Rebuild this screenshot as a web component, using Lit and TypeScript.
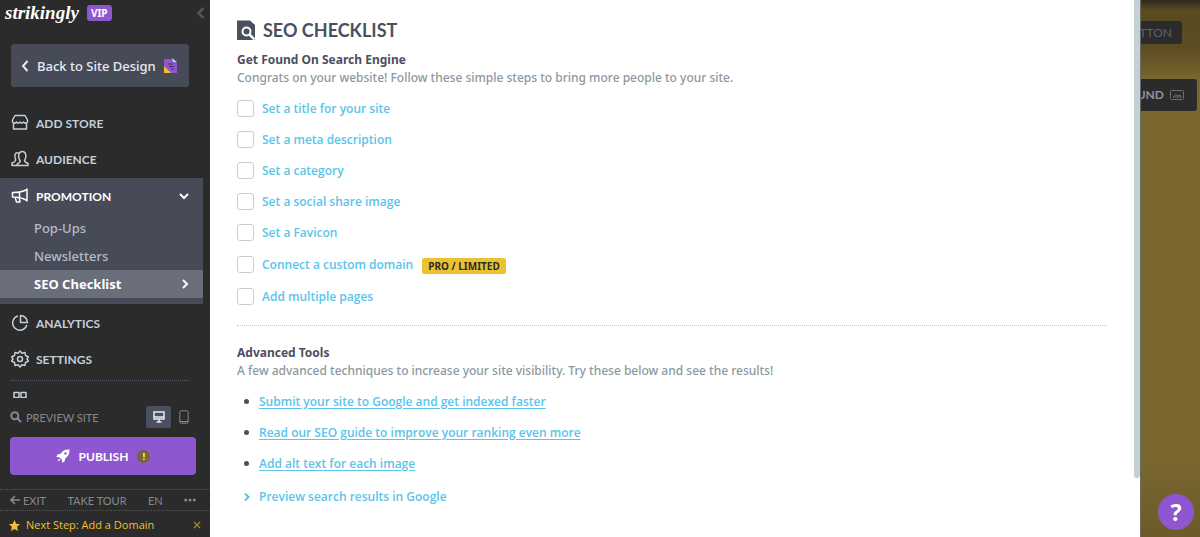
import { LitElement, html, css, svg, nothing } from "lit";
import { customElement, property } from "lit/decorators.js";
import { classMap } from "lit/directives/class-map.js";

const icons = {
  store: svg`<path d="M4 1.500h10l2.500 4.500v2c-1.500 1.500-3 1.500-4 0-1.500 1.500-2.500 1.500-3.500 0-1.500 1.500-2.500 1.500-3.500 0-1 1.500-2.500 1.500-4 0V6z M2.500 9v6h13V9"/>`,
  audience: svg`<path d="M8 13c1.500-1 1.500-2 .5-3.500C6.500 5.500 8 1.500 11.300 1.500s4.700 4 2.700 8c-1 1.500-.5 2.500 3 4V15.500H5.500c.3-1.500 1-2 2.500-2.500z M7.500 3C4 2 3 5.500 4.500 9c.5 2-.5 3-3.500 4v2.500h5"/>`,
  promo: svg`<path d="M16 1.500v13 M16 2.500C12 5 8 5.500 1.500 5.500v4.500C8 10 12 11 16 13.500 M8.500 5.500V10 M4 10l1.500 5H9l-1-5"/>`,
  analytics: svg`<path d="M7 2a7.200 7.200 0 1 0 8.800 9 M9.500 1.500V8.500h7A7.200 7.200 0 0 0 9.500 1.500z"/>`,
  settings: svg`<path d="M9 1l2 2.200 3-.7.500 3L17.500 7 16 9l1.500 2-3 1.500-.5 3-3-.7L9 17l-2-2.200-3 .7-.5-3L.5 11 2 9 .5 7l3-1.500.5-3 3 .7z"/><circle cx="9" cy="9" r="2.500"/>`,
  grid: svg`<path d="M3 2.500h5v5H3z M10 2.500h5v5h-5z"/>`,
};

interface NavItem {
  label: string;
  icon: keyof typeof icons;
  children?: string[];
}

const NAV: NavItem[] = [
  { label: "ADD STORE", icon: "store" },
  { label: "AUDIENCE", icon: "audience" },
  { label: "PROMOTION", icon: "promo", children: ["Pop-Ups", "Newsletters", "SEO Checklist"] },
  { label: "ANALYTICS", icon: "analytics" },
  { label: "SETTINGS", icon: "settings" },
];

@customElement("editor-sidebar")
class EditorSidebar extends LitElement {
  @property() current = "SEO Checklist";

  static styles = css`
    :host {
      display: flex;
      flex-direction: column;
      box-sizing: border-box;
      background: #2b2b2b;
      color: #c3cfd9;
      font-family: Lato, "Open Sans", sans-serif;
      overflow: hidden;
    }
    * { box-sizing: border-box; }
    svg { display: block; flex: none; fill: none; }
    a { color: inherit; text-decoration: none; }
    button { font: inherit; color: inherit; border: 0; background: none; padding: 0; cursor: pointer; }
    .brand { display: flex; align-items: center; height: 26px; padding: 0 5px; flex: none; }
    .wordmark { font: italic bold 19px/24px "Liberation Serif", serif; color: #fff; }
    .vip { margin-left: 8px; padding: 0 4px; border-radius: 3px; background: #8e56cf; color: #fff; font: bold 10px/16px "Noto Sans", sans-serif; }
    .collapse { margin-left: auto; color: #4e5464; }
    .back {
      display: flex; align-items: center; gap: 8px; flex: none;
      height: 43px; margin: 18px 21px 18px 11px; padding: 0 10px;
      border-radius: 3px; background: #474b58; color: #e6ecf1;
      font: 500 13px/18px "Noto Sans", sans-serif; white-space: nowrap;
    }
    nav { flex: 1; min-height: 0; overflow: hidden; }
    ul { list-style: none; margin: 0; padding: 0; }
    .item { display: flex; align-items: center; gap: 7px; height: 36px; padding: 0 14px 0 11px; font-weight: 700; font-size: 12px; }
    .group { margin: 1px 7px 1px 0; padding-bottom: 6px; background: #474b58; }
    .group .item { color: #fff; }
    .grow { margin-left: auto; }
    .sub { display: flex; align-items: center; height: 28px; padding: 0 14px 0 34px; font: 500 13px/18px "Noto Sans", sans-serif; color: #b4bdc7; }
    .active { background: #6a6e7b; color: #fff; font-weight: 700; }
    .rule { margin: 3px 21px 0 11px; border-top: 1px dotted #565b69; }
    .preview { display: flex; align-items: center; height: 22px; margin-top: 8px; padding: 0 14px 0 10px; flex: none; font-size: 11px; color: #858993; }
    .search { display: flex; align-items: center; gap: 4px; margin-right: auto; }
    .device { display: grid; place-items: center; width: 25px; height: 22px; border-radius: 2px; }
    .on { background: #4b5060; color: #e6ecf1; }
    .publish {
      display: flex; align-items: center; justify-content: center; gap: 9px; flex: none;
      height: 38px; margin: 9px 14px 14px 10px; border-radius: 4px;
      background: #8e56cf; color: #fff; font-weight: 700; font-size: 12px;
    }
    .warn { display: grid; place-items: center; width: 13px; height: 13px; border-radius: 50%; background: #7a6730; font-size: 10px; line-height: 13px; }
    .links { display: flex; align-items: center; justify-content: space-between; flex: none; height: 22px; padding: 0 14px 0 10px; border: dotted #50545f; border-width: 1px 0; font-size: 11px; color: #858993; }
    .exit { display: flex; align-items: center; gap: 3px; }
    .next { display: flex; align-items: center; gap: 6px; flex: none; height: 26px; padding: 2px 9px 0; font: 11px/16px "Open Sans", sans-serif; color: #ecc233; }
  `;

  private icon(name: keyof typeof icons) {
    return html`<svg width="18" height="18" viewBox="0 0 18 18" stroke="currentColor" stroke-width="1.500" stroke-linejoin="round">${icons[name]}</svg>`;
  }

  private renderItem(item: NavItem) {
    const row = html`<a class="item" href="#">${this.icon(item.icon)}<span>${item.label}</span>
      ${item.children ? html`<svg class="grow" width="10" height="8" viewBox="0 0 10 8" stroke="currentColor" stroke-width="2"><path d="M1 2l4 4 4-4"/></svg>` : nothing}</a>`;
    if (!item.children) return html`<li>${row}</li>`;
    return html`<li class="group">${row}
      <ul>
        ${item.children.map((c) => html`<li><a href="#" class=${classMap({ sub: true, active: c === this.current })}>${c}
          ${c === this.current ? html`<svg class="grow" width="7" height="10" viewBox="0 0 7 10" stroke="currentColor" stroke-width="2"><path d="M1 1l4 4-4 4"/></svg>` : nothing}</a></li>`)}
      </ul></li>`;
  }

  render() {
    return html`
      <div class="brand">
        <span class="wordmark">strikingly</span><span class="vip">VIP</span>
        <button class="collapse" aria-label="Collapse"><svg width="9" height="12" viewBox="0 0 9 12" stroke="currentColor" stroke-width="2.500"><path d="M7.500 1L2.500 6l5 5"/></svg></button>
      </div>
      <a class="back" href="#">
        <svg width="8" height="12" viewBox="0 0 8 12" stroke="currentColor" stroke-width="2"><path d="M6.500 1L2 6l4.500 5"/></svg>
        <span>Back to Site Design</span>
        <svg width="13" height="15" viewBox="0 0 13 15"><path d="M0 1h8l5 4v10H0z" fill="#8e56cf"/><path d="M0 8l7 7H0z" fill="#ecc233"/><path d="M8 0l5 4H9z" fill="#b9d3df"/><path d="M4 6h5M5 8.500h5M7 11h3" stroke="#3f2c5c"/></svg>
      </a>
      <nav>
        <ul>${NAV.map((i) => this.renderItem(i))}</ul>
        <div class="rule"></div>
        <a class="item" href="#" aria-label="Apps">${this.icon("grid")}</a>
      </nav>
      <div class="preview">
        <a class="search" href="#"><svg width="12" height="12" viewBox="0 0 12 12" stroke="currentColor" stroke-width="2"><circle cx="4.800" cy="4.800" r="3.500"/><path d="M7.500 7.500L11 11"/></svg>PREVIEW SITE</a>
        <button class="device on" aria-label="Desktop"><svg width="12" height="12" viewBox="0 0 12 12" stroke="currentColor" stroke-width="1.500"><path d="M1 1h10v7H1z M1 6h10 M6 8v3 M3.500 11h5"/></svg></button>
        <button class="device" aria-label="Mobile"><svg width="10" height="14" viewBox="0 0 10 14" stroke="currentColor"><rect x=".8" y=".8" width="8.400" height="12.400" rx="1.500"/><path d="M1 11.500h8"/></svg></button>
      </div>
      <button class="publish">
        <svg width="14" height="14" viewBox="0 0 14 14"><path d="M13.500.5C8.500.5 6.500 2 5 4.500L1.500 5.500.3 8l3 .2L6 10.800l.2 3 2.300-1.300L9.500 9c2.500-1.500 4-3.500 4-8.500z M3 9.500L1.500 12.500l3-1.500z" fill="#fff"/><circle cx="9.500" cy="4.500" r="1.200" fill="#8e56cf"/></svg>
        <span>PUBLISH</span><span class="warn">!</span>
      </button>
      <div class="links">
        <a class="exit" href="#"><svg width="10" height="10" viewBox="0 0 10 10" stroke="currentColor" stroke-width="1.600"><path d="M10 5H1.500M5 1L1 5l4 4"/></svg>EXIT</a>
        <a href="#">TAKE TOUR</a><a href="#">EN</a>
        <button aria-label="More"><svg width="12" height="4" viewBox="0 0 12 4"><circle cx="1.700" cy="2" r="1.500" fill="currentColor"/><circle cx="6" cy="2" r="1.500" fill="currentColor"/><circle cx="10.300" cy="2" r="1.500" fill="currentColor"/></svg></button>
      </div>
      <div class="next">
        <svg width="11" height="11" viewBox="0 0 20 20"><path d="M10 0l3 6.700 7 .8-5.200 4.900L16.200 20 10 16.200 3.800 20l1.400-7.600L0 7.500l7-.8z" fill="#ecc233"/></svg>
        <a href="#">Next Step: Add a Domain</a>
        <button class="grow" aria-label="Dismiss"><svg width="8" height="8" viewBox="0 0 8 8" stroke="#a5893a" stroke-width="1.200"><path d="M1 1l6 6M7 1L1 7"/></svg></button>
      </div>
    `;
  }
}

const TASKS: { label: string; badge?: string }[] = [
  { label: "Set a title for your site" },
  { label: "Set a meta description" },
  { label: "Set a category" },
  { label: "Set a social share image" },
  { label: "Set a Favicon" },
  { label: "Connect a custom domain", badge: "PRO / LIMITED" },
  { label: "Add multiple pages" },
];

const TOOLS = [
  "Submit your site to Google and get indexed faster",
  "Read our SEO guide to improve your ranking even more",
  "Add alt text for each image",
];

@customElement("seo-checklist")
class SeoChecklist extends LitElement {
  static styles = css`
    :host { display: block; background: #fff; color: #4b5060; font: 12px/18px "Open Sans", sans-serif; }
    * { box-sizing: border-box; }
    .body { padding: 19px 27px; }
    .title { display: flex; align-items: center; gap: 8px; height: 22px; margin: 0 0 10px; font: 700 18px/22px Lato, sans-serif; }
    h2 { margin: 0; font: 700 12px/18px "Noto Sans", sans-serif; }
    p { margin: 0; color: #8c97a1; font-family: "Noto Sans", sans-serif; font-weight: 500; }
    ul { list-style: none; margin: 0; padding: 0; }
    a { color: #5bc4ea; font-weight: 600; text-decoration: none; }
    .tasks { margin: 6px 0 13px; }
    .task { display: flex; align-items: center; height: 31px; }
    .badged { height: 33px; }
    .box { appearance: none; width: 17px; height: 17px; margin: 0 8px 0 0; border: 1px solid #c3d0d8; border-radius: 3px; background: #fff; }
    .badge { margin: 2px 0 0 9px; padding: 0 6px; border-radius: 2px; background: #ecc233; color: #2b2b2b; font: 700 10px/16px "Noto Sans", sans-serif; }
    .rule { margin: 0 0 18px; border: 0; border-top: 1px dotted #bcc8d0; }
    .tools { margin-top: 6px; }
    .tool { display: flex; align-items: center; height: 31px; padding-left: 7px; }
    .tool a { text-decoration: underline; text-underline-offset: 2px; }
    .dot { width: 5px; height: 5px; margin-right: 10px; border-radius: 50%; background: #4b5060; }
    .more { display: flex; align-items: center; gap: 9px; height: 35px; padding-left: 7px; }
    svg { display: block; flex: none; }
  `;

  render() {
    return html`
      <div class="body">
        <h1 class="title">
          <svg width="18" height="20" viewBox="0 0 18 20"><path d="M0 .5h13l5 4.500v15H0z" fill="#4b5060"/><circle cx="9.500" cy="11.500" r="4" fill="none" stroke="#fff" stroke-width="2"/><path d="M12.500 14.500L17.500 19.500" stroke="#fff" stroke-width="2.500"/></svg>
          SEO CHECKLIST
        </h1>
        <h2>Get Found On Search Engine</h2>
        <p>Congrats on your website! Follow these simple steps to bring more people to your site.</p>
        <ul class="tasks">
          ${TASKS.map((t) => html`<li class=${classMap({ task: true, badged: !!t.badge })}>
            <input class="box" type="checkbox" aria-label=${t.label} />
            <a href="#">${t.label}</a>
            ${t.badge ? html`<span class="badge">${t.badge}</span>` : nothing}
          </li>`)}
        </ul>
        <hr class="rule" />
        <h2>Advanced Tools</h2>
        <p>A few advanced techniques to increase your site visibility. Try these below and see the results!</p>
        <ul class="tools">
          ${TOOLS.map((t) => html`<li class="tool"><span class="dot"></span><a href="#">${t}</a></li>`)}
        </ul>
        <a class="more" href="#"><svg width="6" height="8" viewBox="0 0 6 8"><path d="M1 .5L4.500 4 1 7.500" fill="none" stroke="#5bc4ea" stroke-width="2"/></svg>Preview search results in Google</a>
      </div>
    `;
  }
}

@customElement("app-root")
class AppRoot extends LitElement {
  static styles = css`
    :host { display: flex; position: relative; min-height: 100vh; overflow: hidden; }
    * { box-sizing: border-box; }
    editor-sidebar { flex: 0 0 210px; height: 100vh; }
    seo-checklist { flex: 1; min-width: 0; }
    .track { flex: 0 0 6px; background: #fff; }
    .thumb { height: 89vh; border-radius: 0 0 3px 3px; background: #c3d0d8; }
    .preview {
      flex: 0 0 60px; display: flex; flex-direction: column; align-items: flex-end;
      padding-top: 21px; overflow: hidden; border-left: 1px solid #6d6a60;
      background: linear-gradient(#2f2a20 0, #5a4a22 10px, #5c4c22 48px, #7a6730 80px, #7a6730 85%, #6c5a2a 100%);
    }
    .pill { display: flex; align-items: center; gap: 6px; flex: none; height: 23px; margin: 0 18px 35px 0; padding: 0 10px; border: 0; border-radius: 3px; background: #2b2b2b; color: #5d6170; font: 12px/16px Lato, sans-serif; white-space: nowrap; }
    .wide { height: 32px; margin: 0 3px 0 0; padding: 0 13px; color: #8f949f; font-weight: 700; }
    .help { position: absolute; right: 6px; bottom: 7px; width: 36px; height: 36px; padding: 0; border: 0; border-radius: 50%; background: #8e56cf; color: #fff; font: 700 23px/36px "Noto Sans", sans-serif; }
  `;

  render() {
    return html`
      <editor-sidebar></editor-sidebar>
      <seo-checklist></seo-checklist>
      <div class="track"><div class="thumb"></div></div>
      <div class="preview">
        <button class="pill">BUTTON</button>
        <button class="pill wide">BACKGROUND
          <svg width="14" height="10" viewBox="0 0 14 10" fill="none" stroke="#6a6f7d"><rect x=".5" y=".5" width="13" height="9" rx="1"/><path d="M3 7l2.500-2.500L8 6l2-1 1.500 2z"/></svg>
        </button>
      </div>
      <button class="help" aria-label="Help">?</button>
    `;
  }
}
